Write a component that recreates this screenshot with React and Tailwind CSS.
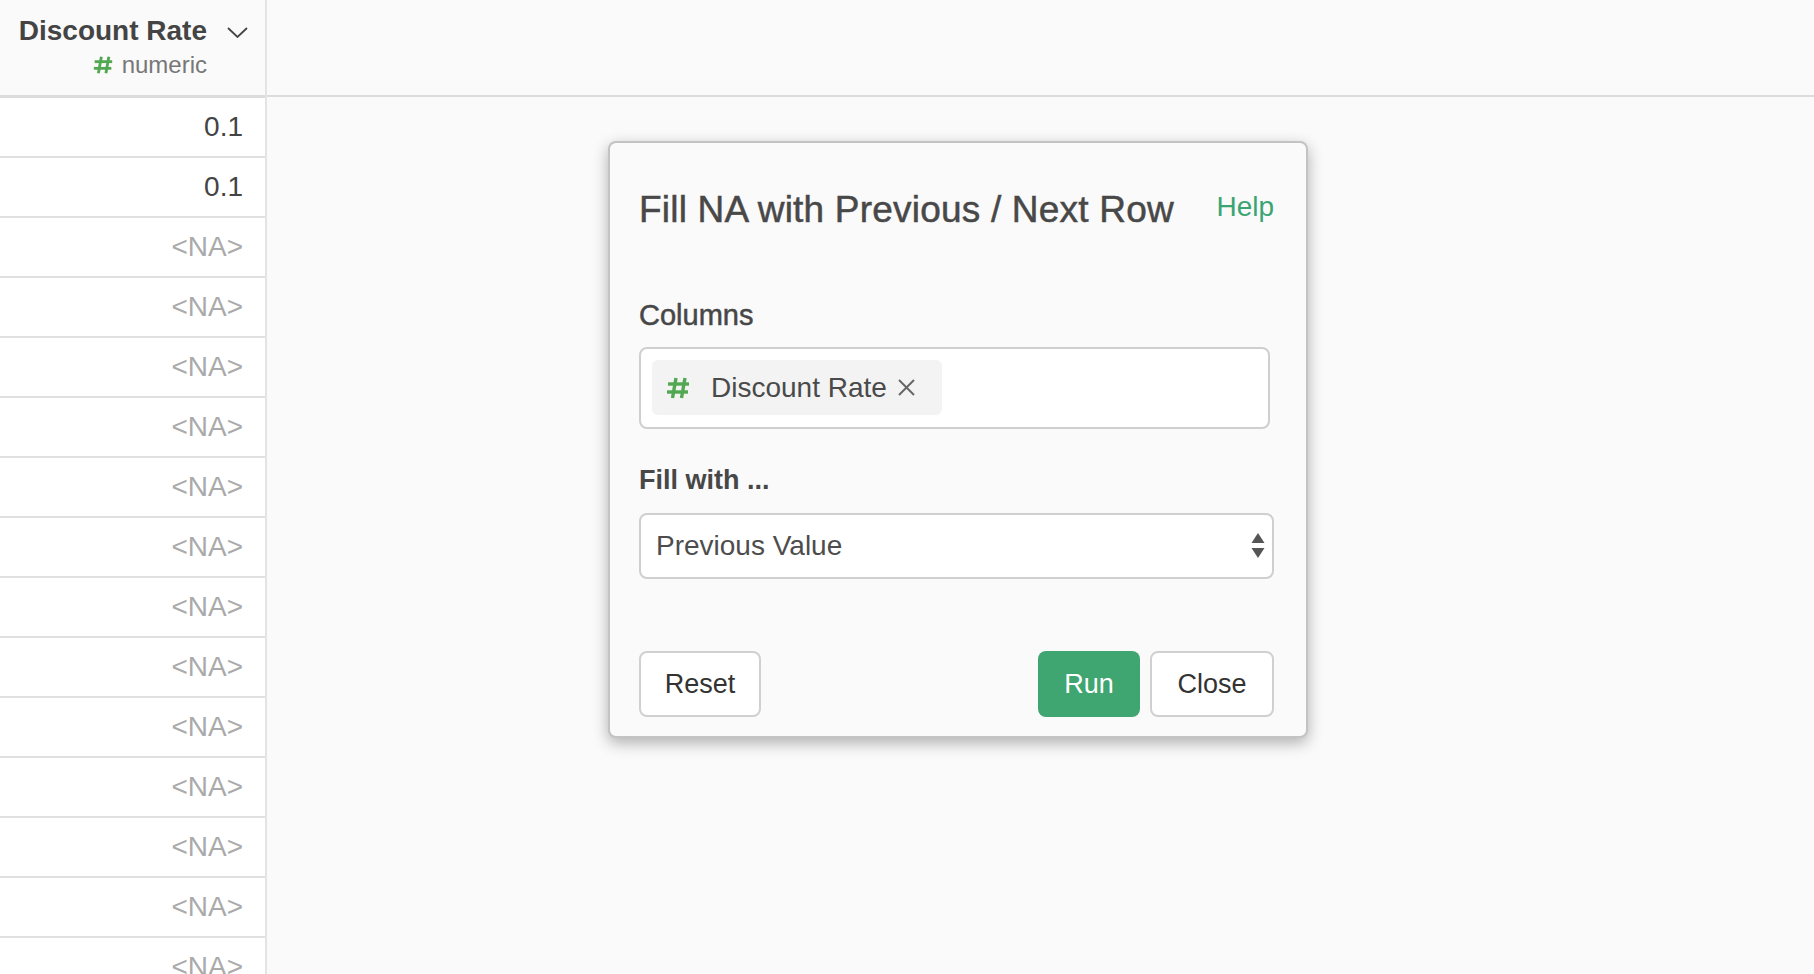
import React from 'react';

const Hash = ({ size = 24 }) => (
  <svg width={size} height={size} viewBox="0 0 24 24" fill="none" stroke="#52a852" strokeWidth="3.4" strokeLinecap="butt">
    <line x1="10" y1="2" x2="6.5" y2="22" />
    <line x1="19" y1="2" x2="15.5" y2="22" />
    <line x1="2" y1="8" x2="23" y2="8" />
    <line x1="1" y1="16" x2="22" y2="16" />
  </svg>
);

const rows = ['0.1', '0.1', ...Array(13).fill('<NA>')];

const Btn = ({ children, className = '' }) => (
  <button className={`h-[66px] rounded-[8px] text-[27px] ${className}`}>{children}</button>
);

export default function App() {
  return (
    <div className="flex h-screen w-full overflow-hidden bg-[#fafafa] font-['Liberation_Sans',Arial,sans-serif]">
      {/* column */}
      <div className="flex w-[267px] shrink-0 flex-col border-r-2 border-[#e4e4e4]">
        <div className="flex h-[98px] shrink-0 border-b-[3px] border-[#dcdcdc] bg-[#fafafa] pr-[17px]">
          <div className="flex-1 pt-[15px] text-right">
            <div className="text-[28px] leading-[32px] font-bold text-[#444]">Discount Rate</div>
            <div className="mt-[4px] flex items-center justify-end gap-[9px] text-[24px] leading-[28px] text-[#777]">
              <Hash size={20} />
              <span>numeric</span>
            </div>
          </div>
          <div className="ml-[20px] pt-[27px]">
            <svg width="21" height="11" viewBox="0 0 21 11" fill="none" stroke="#444" strokeWidth="1.8">
              <polyline points="1,1 10.5,10 20,1" />
            </svg>
          </div>
        </div>
        {rows.map((v, i) => (
          <div
            key={i}
            className={`flex h-[60px] shrink-0 items-center justify-end border-b-2 border-[#e0e0e0] bg-white pr-[22px] text-[28px] ${
              v === '<NA>' ? 'text-[#aaa]' : 'text-[#444]'
            }`}
          >
            {v}
          </div>
        ))}
      </div>

      {/* main area */}
      <div className="flex flex-1 flex-col">
        <div className="h-[97px] shrink-0 border-b-2 border-[#dcdcdc]" />
        <div className="pl-[341px] pt-[44px]">
          <div className="w-[700px] rounded-[8px] border-2 border-[rgba(0,0,0,0.22)] bg-[#fafafa] pb-[19px] pl-[29px] pr-[32px] pt-[46px] shadow-[0_5px_15px_rgba(0,0,0,0.3)]">
            <div className="flex items-start justify-between">
              <h4 className="text-[37px] leading-[42px] tracking-[0.2px] text-[#484848] [-webkit-text-stroke:0.5px_#484848]">
                Fill NA with Previous / Next Row
              </h4>
              <a className="-mt-[3px] text-[28px] leading-[42px] text-[#3aa573]">Help</a>
            </div>

            <div className="mt-[68px] text-[29px] leading-[32px] text-[#474747] [-webkit-text-stroke:0.5px_#474747]">Columns</div>
            <div className="mr-[4px] mt-[16px] h-[82px] rounded-[8px] border-2 border-[#cfcfcf] bg-white pl-[11px] pt-[11px]">
              <div className="inline-flex h-[55px] items-center rounded-[6px] bg-[#f3f3f3] pl-[14px] pr-[26px]">
                <Hash size={24} />
                <span className="ml-[21px] text-[28px] text-[#4a4a4a]">Discount Rate</span>
                <svg className="ml-[10px]" width="19" height="19" viewBox="0 0 19 19" stroke="#666" strokeWidth="2">
                  <line x1="2" y1="2" x2="17" y2="17" />
                  <line x1="17" y1="2" x2="2" y2="17" />
                </svg>
              </div>
            </div>

            <div className="mt-[35px] text-[27px] leading-[32px] font-bold text-[#474747]">Fill with ...</div>
            <div className="mt-[17px] flex h-[66px] items-center justify-between rounded-[8px] border-2 border-[#cfcfcf] bg-white pl-[15px] pr-[7px]">
              <span className="text-[28px] text-[#4d4d4d]">Previous Value</span>
              <svg width="14" height="26" viewBox="0 0 14 26" fill="#555">
                <polygon points="7,0 13.5,10 0.5,10" />
                <polygon points="0.5,15 13.5,15 7,25" />
              </svg>
            </div>

            <div className="mt-[72px] flex items-center">
              <Btn className="w-[122px] border-2 border-[#d0d0d0] bg-white text-[#333]">Reset</Btn>
              <div className="flex-1" />
              <Btn className="w-[102px] bg-[#3fa571] text-white">Run</Btn>
              <Btn className="ml-[10px] w-[124px] border-2 border-[#d0d0d0] bg-white text-[#333]">Close</Btn>
            </div>
          </div>
        </div>
      </div>
    </div>
  );
}
